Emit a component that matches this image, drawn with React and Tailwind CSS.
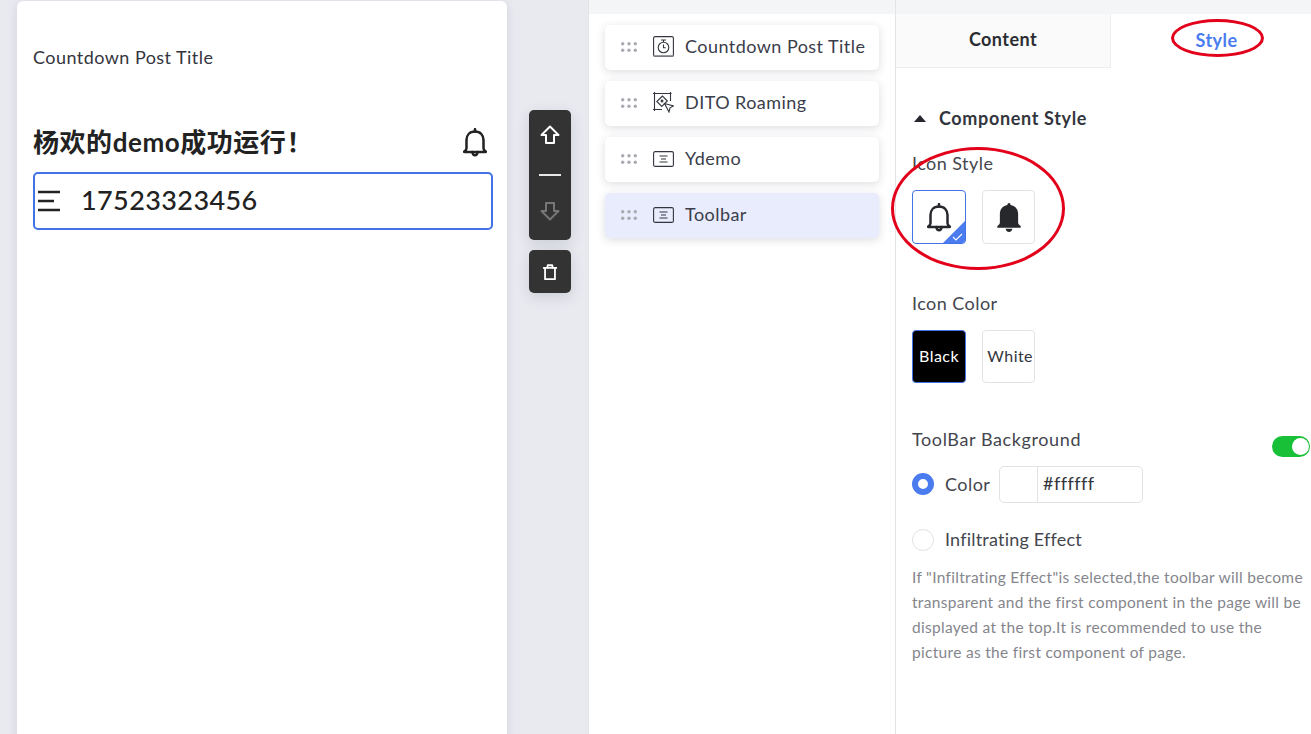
import React from 'react';

function BellOutline({ className }) {
  return (
    <svg viewBox="1 0.500 22 26.500" className={className} fill="none" stroke="currentColor" strokeWidth="2.300" strokeLinejoin="round" strokeLinecap="round">
      <path d="M12 1.500v2.200" />
      <path d="M12 3.700c-5 0-7.800 3.400-7.800 7.800v7.600c0 1.200-.8 2.200-2 2.900-.4.300-.2.500.2.500h19.200c.4 0 .6-.2.200-.5-1.200-.7-2-1.700-2-2.900v-7.600c0-4.400-2.800-7.800-7.800-7.800z" />
      <path d="M9.500 22.500c.4 2 1.300 3 2.500 3s2.100-1 2.500-3" />
    </svg>
  );
}

function BellSolid({ className }) {
  return (
    <svg viewBox="1 0.500 22 27" className={className} fill="currentColor">
      <path d="M12 .5c.9 0 1.500.7 1.500 1.800 4.700.8 7 4.300 7 8.700v7.600c0 1.300.8 2.300 2 3 .8.500.7 1.900-.5 1.900H2c-1.200 0-1.300-1.400-.5-1.900 1.200-.7 2-1.700 2-3V11c0-4.400 2.300-7.900 7-8.700C10.500 1.200 11.100.5 12 .5z" />
      <path d="M8.800 24.500h6.400c-.4 1.900-1.700 3-3.200 3s-2.800-1.100-3.200-3z" />
    </svg>
  );
}

function ArrowUp({ className }) {
  return (
    <svg viewBox="0 0 20 20" className={className} fill="none" stroke="currentColor" strokeWidth="2" strokeLinejoin="round">
      <path d="M10 1.500 1.500 10h4.500v8h8v-8h4.500z" />
    </svg>
  );
}

function ArrowDown({ className }) {
  return (
    <svg viewBox="0 0 20 20" className={className} fill="none" stroke="currentColor" strokeWidth="2" strokeLinejoin="round">
      <path d="M10 18.500 1.500 10h4.500V2h8v8h4.500z" />
    </svg>
  );
}

function Trash({ className }) {
  return (
    <svg viewBox="0 0 20 20" className={className} fill="none" stroke="currentColor" strokeWidth="2" strokeLinejoin="round" strokeLinecap="round">
      <path d="M3 5.500h14" />
      <path d="M7 5.500 7.500 2.500h5l.5 3" />
      <path d="M4.500 5.500v12.500h11V5.500" />
    </svg>
  );
}

function DragDots() {
  return (
    <svg viewBox="0 0 16 10" className="w-4 h-[10px] text-[#a9abb3]" fill="currentColor">
      {[1.700, 8, 14.300].map((x) => (
        <g key={x}>
          <circle cx={x} cy="1.700" r="1.700" />
          <circle cx={x} cy="8.300" r="1.700" />
        </g>
      ))}
    </svg>
  );
}

function TimerIcon() {
  return (
    <svg viewBox="0 0 21 21" className="w-[21px] h-[21px] text-[#33363f]" fill="none" stroke="currentColor" strokeWidth="1.100">
      <rect x="0.600" y="0.600" width="19.800" height="19.800" rx="1.500" />
      <path d="M0.600 20h19.800" strokeWidth="1.600" stroke="#8b8d94" />
      <circle cx="10.500" cy="11.500" r="5.300" />
      <path d="M10.500 8.500v3.200h2.200M8 4h5M10.500 4v2" />
    </svg>
  );
}

function RoamIcon() {
  return (
    <svg viewBox="0 0 21 21" className="w-[21px] h-[21px] text-[#33363f]" fill="none" stroke="currentColor" strokeWidth="1.100">
      <path d="M0 1.500h18.500M1.500 0v19M0 17.500h9M17.500 0v9" />
      <path d="M9.500 4 3.800 9.500l5 5 5.500-5.500z" />
      <circle cx="9" cy="9" r="0.900" />
      <path d="M11.500 11.500 20.500 14l-3.500 1.800-1 4.200z" fill="#fff" />
    </svg>
  );
}

function BarIcon() {
  return (
    <svg viewBox="0 0 21 16" className="w-[21px] h-4 text-[#33363f]" fill="none" stroke="currentColor" strokeWidth="1.100">
      <rect x="0.600" y="0.600" width="19.800" height="14.800" rx="1.500" />
      <path d="M6.500 5h8M8 8h5M6.500 11h8" />
    </svg>
  );
}

function LayerRow({ icon, label, active }) {
  return (
    <div className={`h-[45px] rounded-[5px] flex items-center pl-4 pb-[2px] shadow-[0_2px_8px_rgba(40,45,70,0.16)] ${active ? 'bg-[#e9ecfc]' : 'bg-white'}`}>
      <DragDots />
      <div className="w-[21px] ml-4 flex items-center justify-center">{icon}</div>
      <span className="ml-[11px] text-[18px] text-[#3a3d4a] whitespace-nowrap">{label}</span>
    </div>
  );
}

export default function App() {
  return (
    <div className="w-[1311px] h-[734px] overflow-hidden flex bg-white text-[#33353d] font-['Lato','Noto_Sans_CJK_SC',sans-serif] tracking-[0.45px]">
      {/* canvas */}
      <div className="w-[588px] h-full bg-[#e9eaf0] flex pt-px pl-[17px] shrink-0">
        <div className="w-[490px] h-[800px] bg-white rounded-t-[6px] shadow-[0_2px_10px_rgba(40,45,70,0.12)] pl-4 pr-[14px] shrink-0">
          <div className="h-[113px] pt-[44px] text-[18px] leading-6 text-[#33353d]">Countdown Post Title</div>
          <div className="h-[58px] flex items-center justify-between pr-[6px] pb-[2px]">
            <span className="text-[26px] font-bold text-[#222] tracking-[0.55px]">杨欢的demo成功运行！</span>
            <BellOutline className="w-6 h-[29px] text-[#222]" />
          </div>
          <div className="h-[58px] border-2 border-[#4272e5] rounded-[5px] flex items-center pb-[2px]">
            <svg viewBox="0 0 24 22" className="w-6 h-[22px] ml-[2px] mt-[2px] text-[#222]" fill="none" stroke="currentColor" strokeWidth="2.500">
              <path d="M1 2h22M1 11h16M1 20h22" />
            </svg>
            <span className="ml-5 text-[27px] font-medium text-[#222] tracking-[0.4px]">17523323456</span>
          </div>
        </div>
        <div className="ml-[22px] pt-[109px] w-[42px] shrink-0">
          <div className="h-[130px] rounded-[5px] bg-[#333] shadow-[0_4px_14px_rgba(40,45,70,0.15)] flex flex-col items-center pt-[15px]">
            <ArrowUp className="w-5 h-5 text-white" />
            <div className="w-[22px] h-[2px] bg-[#e8e8e8] mt-[29px]" />
            <ArrowDown className="w-5 h-5 text-[#777] mt-[25px]" />
          </div>
          <div className="mt-[10px] h-[43px] rounded-[5px] bg-[#333] shadow-[0_4px_14px_rgba(40,45,70,0.15)] flex items-center justify-center">
            <Trash className="w-[18px] h-[18px] text-white" />
          </div>
        </div>
      </div>

      {/* layer list */}
      <div className="w-[308px] h-full border-l border-r border-[#e3e4e8] shrink-0 bg-white">
        <div className="h-[14px] bg-[#f4f5f7]" />
        <div className="ml-4 mt-[11px] w-[274px] flex flex-col gap-[11px]">
          <LayerRow icon={<TimerIcon />} label="Countdown Post Title" />
          <LayerRow icon={<RoamIcon />} label="DITO Roaming" />
          <LayerRow icon={<BarIcon />} label="Ydemo" />
          <LayerRow icon={<BarIcon />} label="Toolbar" active />
        </div>
      </div>

      {/* settings */}
      <div className="relative flex-1 h-full">
        <div className="h-[14px] bg-[#f4f5f7]" />
        <div className="flex h-[54px] text-[18px] font-bold">
          <div className="w-[215px] bg-[#fafafa] border-b border-r border-[#eeeeee] flex items-center justify-center text-[#2b2d33] pb-[2px]">Content</div>
          <div className="flex-1 flex items-center justify-center text-[#4a7cf0] pl-[11px] pb-[2px]">Style</div>
        </div>

        <div className="pl-4 pr-[7px]">
          <div className="mt-[40px] h-5 flex items-center">
            <div className="w-0 h-0 ml-[2px] border-l-[6px] border-r-[6px] border-b-[7px] border-l-transparent border-r-transparent border-b-[#26282e]" />
            <span className="ml-[13px] text-[18px] font-bold text-[#33353d] tracking-[0.65px]">Component Style</span>
          </div>

          <div className="mt-[23px] h-[24px] leading-6 text-[18px] text-[#44464e]">Icon Style</div>
          <div className="mt-[15px] flex gap-4">
            <div className="relative w-[54px] h-[54px] rounded-[4px] border border-[#4272e5] flex items-center justify-center overflow-hidden">
              <BellOutline className="w-[24px] h-[29px] text-[#26282c]" />
              <svg viewBox="0 0 22 22" className="absolute right-0 bottom-0 w-[22px] h-[22px]">
                <path d="M22 0v22H0z" fill="#4a7cf0" />
                <path d="M10 16l3 3 6-6" fill="none" stroke="#fff" strokeWidth="1.100" />
              </svg>
            </div>
            <div className="w-[53px] h-[54px] rounded-[4px] border border-[#e3e3e3] flex items-center justify-center">
              <BellSolid className="w-[24px] h-[29px] text-[#26282c]" />
            </div>
          </div>

          <div className="mt-[47px] h-[24px] leading-6 text-[18px] text-[#44464e]">Icon Color</div>
          <div className="mt-[15px] flex gap-4 text-[16px]">
            <div className="w-[54px] h-[53px] rounded-[4px] border border-[#4272e5] bg-black text-white flex items-center justify-center pb-[2px]">Black</div>
            <div className="w-[53px] h-[53px] rounded-[4px] border border-[#e3e3e3] text-[#33353d] flex items-center justify-end pr-px pb-[2px]">White</div>
          </div>

          <div className="mt-[44px] flex justify-between mr-[-6px]">
            <span className="h-[24px] leading-6 text-[18px] text-[#44464e] tracking-[0.6px]">ToolBar Background</span>
            <div className="mt-[-4px] translate-y-[13px] w-[38px] h-[21px] rounded-full bg-[#17c037] flex items-center justify-end pr-px">
              <div className="w-[17px] h-[17px] rounded-full bg-white" />
            </div>
          </div>

          <div className="mt-[15px] flex items-center h-[37px] text-[18px] text-[#44464e]">
            <div className="w-[22px] h-[22px] mb-[2px] rounded-full border-[6px] border-[#4a7cf0] bg-white" />
            <span className="ml-[11px] w-[43px]">Color</span>
            <div className="ml-[11px] w-[144px] h-[37px] rounded-[5px] border border-[#e3e3e3] flex">
              <div className="w-[38px] border-r border-[#e3e3e3]" />
              <span className="pl-[5px] leading-[33px] text-[#33353d]">#ffffff</span>
            </div>
          </div>

          <div className="mt-[25px] flex items-center h-[24px] text-[18px] text-[#44464e]">
            <div className="w-[22px] h-[22px] rounded-full border border-[#e3e3e3] bg-white" />
            <span className="ml-[11px] pb-[2px] tracking-[0.2px]">Infiltrating Effect</span>
          </div>

          <p className="mt-[13px] text-[15.500px] leading-[25px] text-[#85868c] tracking-[0.3px]">
            If "Infiltrating Effect"is selected,the toolbar will become transparent and the first component in the page will be displayed at the top.It is recommended to use the picture as the first component of page.
          </p>
        </div>

        {/* red annotations */}
        <div className="absolute left-[275px] top-[19px] w-[93px] h-[38px] rounded-[50%] border-[3px] border-[#e2001a]" />
        <div className="absolute left-[-5px] top-[147px] w-[174px] h-[123px] rounded-[50%] border-[3px] border-[#e2001a]" />
      </div>
    </div>
  );
}
